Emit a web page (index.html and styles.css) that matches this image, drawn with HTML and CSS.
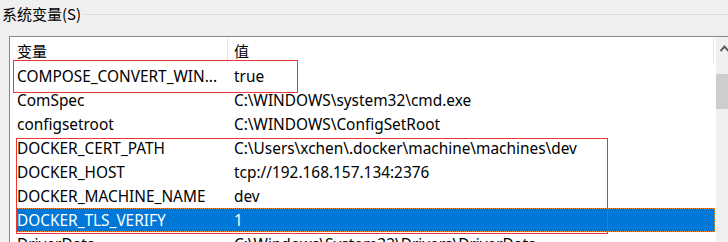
FILE: index.html
```html
<!DOCTYPE html>
<html lang="zh-CN">
<head>
<meta charset="utf-8">
<title>系统变量</title>
<link rel="stylesheet" href="styles.css">
</head>
<body>
<div class="page">
  <div class="group-label">
    <span class="group-text">系统变量(S)</span>
    <span class="group-line"></span>
  </div>
  <div class="listbox">
    <div class="list-main">
      <div class="list-header">
        <div class="hcell hcell-name">变量</div>
        <div class="hcell hcell-value">值</div>
      </div>
      <div class="rows">
        <div class="row"><span class="c1">COMPOSE_CONVERT_WIN...</span><span class="c2">true</span></div>
        <div class="row"><span class="c1">ComSpec</span><span class="c2">C:\WINDOWS\system32\cmd.exe</span></div>
        <div class="row"><span class="c1">configsetroot</span><span class="c2">C:\WINDOWS\ConfigSetRoot</span></div>
        <div class="row"><span class="c1">DOCKER_CERT_PATH</span><span class="c2">C:\Users\xchen\.docker\machine\machines\dev</span></div>
        <div class="row"><span class="c1">DOCKER_HOST</span><span class="c2">tcp://192.168.157.134:2376</span></div>
        <div class="row"><span class="c1">DOCKER_MACHINE_NAME</span><span class="c2">dev</span></div>
        <div class="row row-selected"><span class="c1">DOCKER_TLS_VERIFY</span><span class="c2">1</span></div>
        <div class="row"><span class="c1">DriverData</span><span class="c2">C:\Windows\System32\Drivers\DriverData</span></div>
      </div>
    </div>
    <div class="scrollbar">
      <svg class="arrow arrow-up" width="9" height="7" viewBox="0 0 9 7"><polyline points="0.5,6 4.5,1.5 8.5,6" fill="none" stroke="#606060" stroke-width="2"/></svg>
      <div class="thumb"></div>
      <div class="track-fill"></div>
      <svg class="arrow arrow-down" width="9" height="7" viewBox="0 0 9 7"><polyline points="0.5,1 4.5,5.5 8.5,1" fill="none" stroke="#606060" stroke-width="2"/></svg>
    </div>
  </div>
  <div class="mark mark-compose"></div>
  <div class="mark mark-docker"></div>
</div>
</body>
</html>
```
FILE: styles.css
```css
html, body {
  margin: 0;
  padding: 0;
  background: #f0f0f0;
  overflow: hidden;
}
.page {
  position: relative;
  width: 728px;
  height: 242px;
  overflow: hidden;
  font-family: "Noto Sans", "Noto Sans CJK SC", sans-serif;
  font-size: 15px;
  color: #000;
}
.group-label {
  display: flex;
  align-items: center;
  height: 28px;
  padding-left: 2px;
}
.group-text {
  font-family: "Noto Sans CJK SC", "Noto Sans", sans-serif;
  line-height: 28px;
  white-space: nowrap;
}
.group-line {
  flex: 1;
  height: 1px;
  margin-left: 3px;
  background: #dcdcdc;
}
.listbox {
  display: flex;
  margin-top: 8px;
  margin-left: 9px;
  width: 740px;
  height: 220px;
  border: 1px solid #828790;
  background: #fff;
}
.list-main {
  width: 706px;
  flex: none;
  overflow: hidden;
}
.list-header {
  display: flex;
  height: 27px;
  padding-right: 2px;
}
.hcell {
  display: flex;
  align-items: center;
  height: 25px;
  margin-top: 1px;
  font-family: "Noto Sans CJK SC", "Noto Sans", sans-serif;
  border-right: 1px solid #e5e5e5;
}
.hcell-name {
  width: 210px;
  padding-left: 7px;
}
.hcell-value {
  flex: 1;
  padding-left: 6px;
}
.rows {
  display: flex;
  flex-direction: column;
}
.row {
  display: grid;
  grid-template-columns: 212px 1fr;
  height: 24px;
  margin-left: 6px;
  margin-right: 1px;
  font-size: 15.4px;
  line-height: 23px;
  padding-top: 1px;
  box-sizing: border-box;
  white-space: nowrap;
}
.c1 {
  padding-left: 1px;
  overflow: hidden;
}
.c2 {
  padding-left: 6px;
  overflow: hidden;
}
.row-selected {
  background: #0078d7;
  color: #fff;
  outline: 1px dotted #ff8c28;
  outline-offset: -1px;
}
.scrollbar {
  width: 17px;
  flex: none;
  display: flex;
  flex-direction: column;
  align-items: center;
  background: #f0f0f0;
}
.arrow {
  display: block;
  flex: none;
}
.arrow-up {
  margin-top: 8px;
}
.thumb {
  align-self: stretch;
  height: 35px;
  margin-top: 22px;
  background: #cdcdcd;
  flex: none;
}
.track-fill {
  flex: 1;
}
.arrow-down {
  margin-bottom: 6px;
}
.mark {
  position: absolute;
  box-sizing: border-box;
  border: 1px solid #ee3535;
}
.mark-compose {
  left: 13px;
  top: 60px;
  width: 285px;
  height: 33px;
}
.mark-docker {
  left: 16px;
  top: 138px;
  width: 592px;
  height: 96px;
}
```
